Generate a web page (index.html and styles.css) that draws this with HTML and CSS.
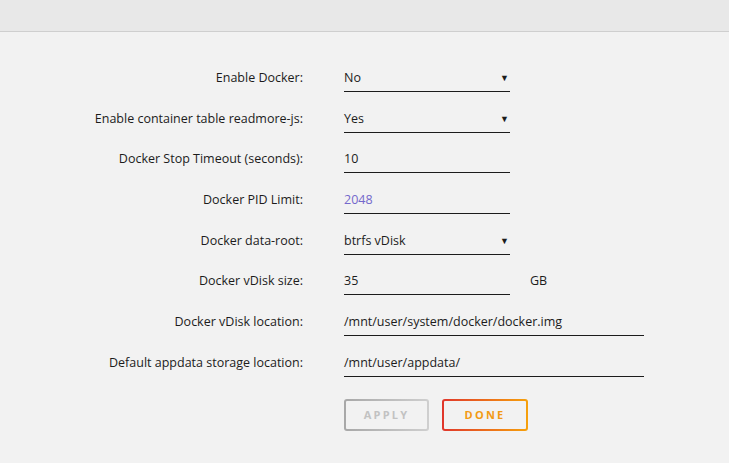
FILE: index.html
```html
<!DOCTYPE html>
<html lang="en">
<head>
    <meta charset="UTF-8">
    <meta name="viewport" content="width=device-width, initial-scale=1.0">
    <title>Docker Settings</title>
    <link rel="stylesheet" href="styles.css">
</head>
<body>
<div class="header"></div>
<form class="settings">
    <label class="label">Enable Docker:</label>
    <div class="field"><div class="select narrow">No<span class="arrow">&#9660;</span></div></div>

    <label class="label">Enable container table readmore-js:</label>
    <div class="field"><div class="select narrow">Yes<span class="arrow">&#9660;</span></div></div>

    <label class="label">Docker Stop Timeout (seconds):</label>
    <div class="field"><div class="input narrow">10</div></div>

    <label class="label">Docker PID Limit:</label>
    <div class="field"><div class="input narrow placeholder">2048</div></div>

    <label class="label">Docker data-root:</label>
    <div class="field"><div class="select narrow">btrfs vDisk<span class="arrow">&#9660;</span></div></div>

    <label class="label">Docker vDisk size:</label>
    <div class="field"><div class="input narrow">35</div><span class="unit">GB</span></div>

    <label class="label">Docker vDisk location:</label>
    <div class="field"><div class="input wide">/mnt/user/system/docker/docker.img</div></div>

    <label class="label">Default appdata storage location:</label>
    <div class="field"><div class="input wide">/mnt/user/appdata/</div></div>

    <div></div>
    <div class="buttons">
        <button type="button" class="btn apply">APPLY</button>
        <button type="button" class="btn done">DONE</button>
    </div>
</form>
</body>
</html>
```
FILE: styles.css
```css
body {
    margin: 0;
    background-color: #f2f2f2;
    font-family: "Open Sans", "Noto Sans", sans-serif;
    font-size: 12.5px;
    color: #1c1c1c;
}
.header {
    height: 31px;
    background-color: #e8e8e8;
    border-bottom: 1px solid #cfcfcf;
}
.settings {
    display: grid;
    grid-template-columns: 303px 1fr;
    column-gap: 41px;
    grid-auto-rows: 40.7px;
    padding-top: 37px;
}
.label {
    text-align: right;
    line-height: 18px;
    height: 22px;
}
.field {
    display: flex;
    align-items: flex-start;
}
.input, .select {
    position: relative;
    height: 22px;
    line-height: 18px;
    border-bottom: 1px solid #1c1c1c;
    white-space: nowrap;
}
.narrow {
    width: 166px;
}
.wide {
    width: 300px;
}
.placeholder {
    color: #7468cc;
}
.arrow {
    position: absolute;
    right: 1px;
    top: 0;
    font-size: 9px;
}
.unit {
    margin-left: 20px;
    line-height: 18px;
}
.buttons {
    display: flex;
    gap: 13px;
    padding-top: 4px;
}
.btn {
    width: 85px;
    height: 32px;
    border: 2px solid transparent;
    border-radius: 3px;
    font-family: "Open Sans", "Noto Sans", sans-serif;
    font-size: 11px;
    font-weight: bold;
    letter-spacing: 2.2px;
    cursor: pointer;
}
.apply {
    color: #c2c2c2;
    background: linear-gradient(#f2f2f2, #f2f2f2) padding-box,
                linear-gradient(90deg, #a8a8a8, #cfcfcf) border-box;
}
.done {
    width: 86px;
    color: #f29a14;
    background: linear-gradient(#f2f2f2, #f2f2f2) padding-box,
                linear-gradient(90deg, #e0362c, #f6a10c) border-box;
}
```
